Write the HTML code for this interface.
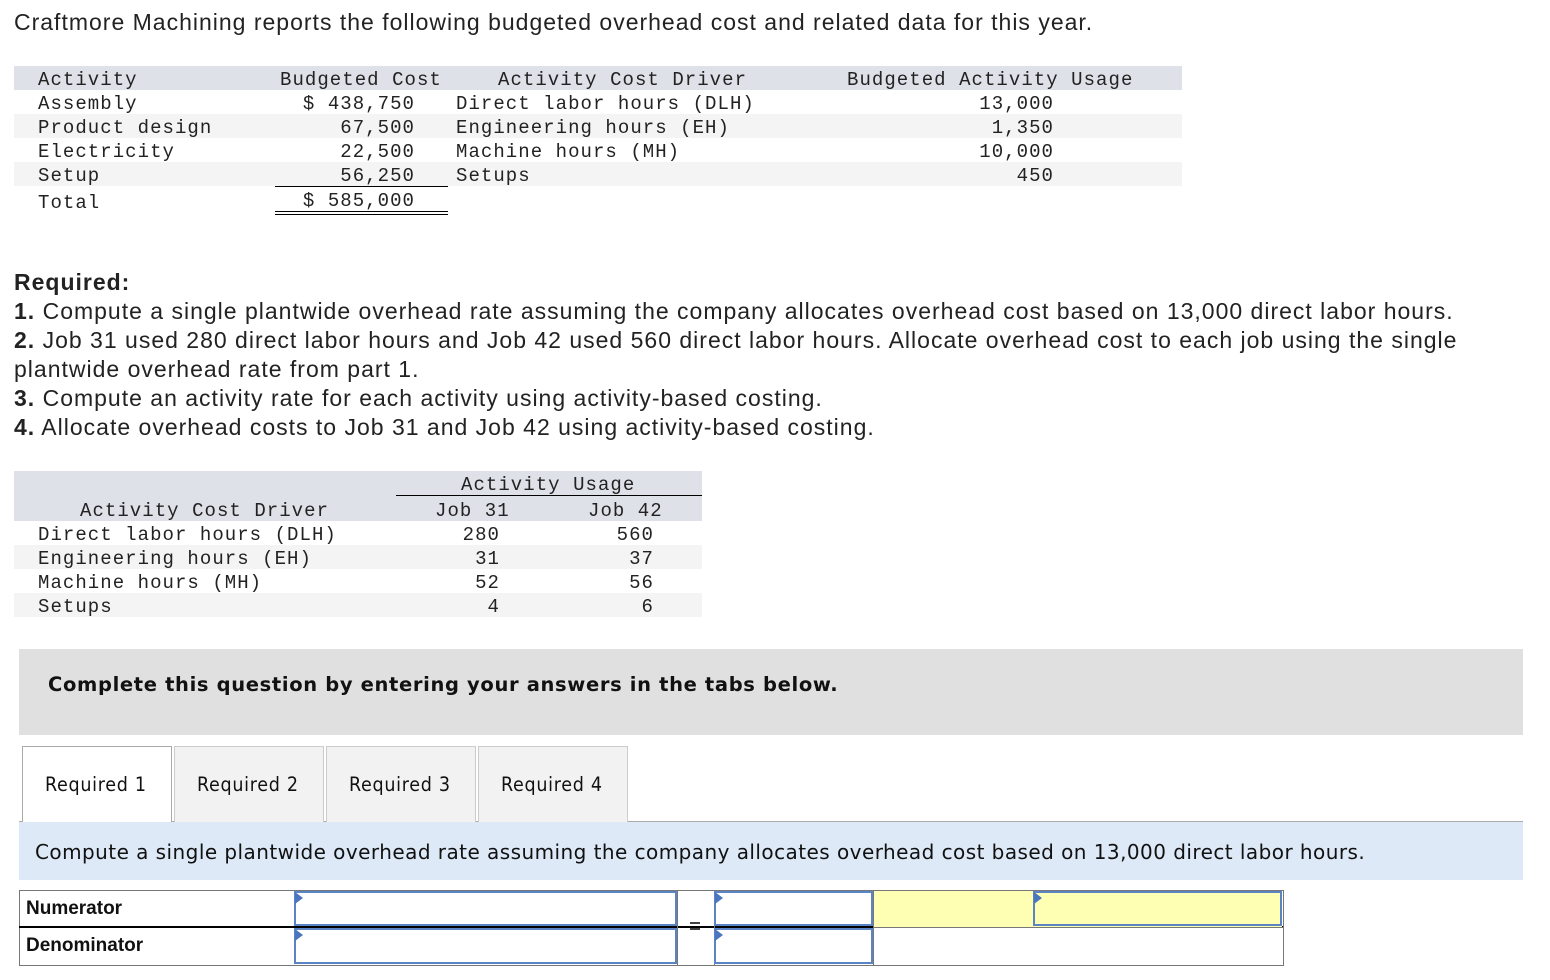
<!DOCTYPE html>
<html><head><style>
body{margin:0;width:1550px;height:980px;background:#fff;position:relative;overflow:hidden;font-family:"Liberation Sans",Arial,sans-serif;color:#222}
.a{position:absolute;white-space:nowrap}
.m{font-family:"Liberation Mono",monospace;font-size:19px;letter-spacing:1.05px;color:#222;line-height:24px}
.s{font-size:23px;line-height:29px;letter-spacing:1.0px}
.bg{position:absolute}
.r{text-align:right}
.inp{position:absolute;border:2px solid #5b84c4;box-sizing:border-box;background:#fff}
.inp:before{content:"";position:absolute;left:-1px;top:-1px;border-left:8px solid #4a76c0;border-top:6px solid transparent;border-bottom:6px solid transparent}
.tab{position:absolute;top:773px;font-size:19.5px;font-family:'DejaVu Sans Condensed','DejaVu Sans',sans-serif;color:#111;letter-spacing:0.7px}
</style></head><body>
<div class="a s" style="left:14px;top:8px">Craftmore Machining reports the following budgeted overhead cost and related data for this year.</div>

<div class="bg" style="left:14px;top:66px;width:1168px;height:24px;background:#dfe1e9"></div>
<div class="bg" style="left:14px;top:114px;width:1168px;height:24px;background:#f4f4f4"></div>
<div class="bg" style="left:14px;top:162px;width:1168px;height:24px;background:#f4f4f4"></div>
<div class="bg" style="left:275px;top:186px;width:173px;height:1px;background:#000"></div>
<div class="bg" style="left:275px;top:211px;width:173px;height:1px;background:#000"></div>
<div class="bg" style="left:275px;top:214px;width:173px;height:1px;background:#000"></div>

<div class="a m" style="left:38px;top:68px">Activity<br>Assembly<br>Product design<br>Electricity<br>Setup</div>
<div class="a m" style="left:38px;top:191px">Total</div>
<div class="a m" style="left:280px;top:68px">Budgeted Cost</div>
<div class="a m r" style="right:1135px;top:92px">$ 438,750<br>67,500<br>22,500<br>56,250</div>
<div class="a m r" style="right:1135px;top:189px">$ 585,000</div>
<div class="a m" style="left:498px;top:68px">Activity Cost Driver</div>
<div class="a m" style="left:456px;top:92px">Direct labor hours (DLH)<br>Engineering hours (EH)<br>Machine hours (MH)<br>Setups</div>
<div class="a m" style="left:847px;top:68px">Budgeted Activity Usage</div>
<div class="a m r" style="right:496px;top:92px">13,000<br>1,350<br>10,000<br>450</div>

<div class="a s" style="left:14px;top:268px"><b>Required:</b><br><b>1.</b> Compute a single plantwide overhead rate assuming the company allocates overhead cost based on 13,000 direct labor hours.<br><b>2.</b> Job 31 used 280 direct labor hours and Job 42 used 560 direct labor hours. Allocate overhead cost to each job using the single<br>plantwide overhead rate from part 1.<br><b>3.</b> Compute an activity rate for each activity using activity-based costing.<br><b>4.</b> Allocate overhead costs to Job 31 and Job 42 using activity-based costing.</div>

<div class="bg" style="left:14px;top:471px;width:688px;height:50px;background:#dfe1e9"></div>
<div class="bg" style="left:14px;top:545px;width:688px;height:24px;background:#f4f4f4"></div>
<div class="bg" style="left:14px;top:593px;width:688px;height:24px;background:#f4f4f4"></div>
<div class="bg" style="left:396px;top:495px;width:306px;height:1px;background:#000"></div>
<div class="a m" style="left:461px;top:473px">Activity Usage</div>
<div class="a m" style="left:80px;top:499px">Activity Cost Driver</div>
<div class="a m" style="left:435px;top:499px">Job 31</div>
<div class="a m" style="left:588px;top:499px">Job 42</div>
<div class="a m" style="left:38px;top:523px">Direct labor hours (DLH)<br>Engineering hours (EH)<br>Machine hours (MH)<br>Setups</div>
<div class="a m r" style="right:1050px;top:523px">280<br>31<br>52<br>4</div>
<div class="a m r" style="right:896px;top:523px">560<br>37<br>56<br>6</div>

<div class="bg" style="left:19px;top:649px;width:1504px;height:86px;background:#e0e0e0"></div>
<div class="a" style="left:48px;top:673px;font-family:'DejaVu Sans',sans-serif;font-weight:bold;font-size:19.5px;letter-spacing:0.65px;color:#111">Complete this question by entering your answers in the tabs below.</div>

<div class="bg" style="left:19px;top:821px;width:1504px;height:1px;background:#aaa"></div>
<div class="bg" style="left:22px;top:746px;width:148px;height:76px;background:#fff;border:1px solid #aaa;border-bottom:none"></div>
<div class="bg" style="left:174px;top:746px;width:148px;height:75px;background:#f2f2f2;border:1px solid #ccc;border-bottom:none"></div>
<div class="bg" style="left:326px;top:746px;width:148px;height:75px;background:#f2f2f2;border:1px solid #ccc;border-bottom:none"></div>
<div class="bg" style="left:478px;top:746px;width:148px;height:75px;background:#f2f2f2;border:1px solid #ccc;border-bottom:none"></div>
<div class="tab" style="left:45px">Required 1</div>
<div class="tab" style="left:197px">Required 2</div>
<div class="tab" style="left:349px">Required 3</div>
<div class="tab" style="left:501px">Required 4</div>

<div class="bg" style="left:19px;top:822px;width:1504px;height:58px;background:#dde9f7"></div>
<div class="a" style="left:35px;top:840px;font-size:20px;font-family:'DejaVu Sans',sans-serif;letter-spacing:0.45px;color:#111">Compute a single plantwide overhead rate assuming the company allocates overhead cost based on 13,000 direct labor hours.</div>

<div class="bg" style="left:19px;top:890px;width:1263px;height:74px;border:1px solid #777"></div>
<div class="bg" style="left:19px;top:926px;width:1264px;height:2px;background:#000"></div>
<div class="bg" style="left:677px;top:890px;width:1px;height:75px;background:#777"></div>
<div class="bg" style="left:714px;top:890px;width:1px;height:75px;background:#777"></div>
<div class="bg" style="left:873px;top:891px;width:409px;height:36px;background:#ffffb4"></div>
<div class="bg" style="left:873px;top:927px;width:410px;height:1px;background:#777"></div>
<div class="a" style="left:26px;top:898px;font-size:19px;font-weight:bold;color:#111">Numerator</div>
<div class="a" style="left:26px;top:935px;font-size:19px;font-weight:bold;color:#111">Denominator</div>
<div class="inp" style="left:294px;top:891px;width:383px;height:35px"></div>
<div class="inp" style="left:294px;top:928px;width:383px;height:36px"></div>
<div class="bg" style="left:690px;top:922px;width:10px;height:2px;background:#444"></div>
<div class="bg" style="left:690px;top:928px;width:10px;height:2px;background:#444"></div>
<div class="inp" style="left:714px;top:891px;width:159px;height:35px"></div>
<div class="inp" style="left:714px;top:928px;width:159px;height:36px"></div>
<div class="bg" style="left:873px;top:890px;width:1px;height:75px;background:#777"></div>
<div class="inp" style="left:1033px;top:891px;width:249px;height:35px;background:#ffffb4"></div>
</body></html>
